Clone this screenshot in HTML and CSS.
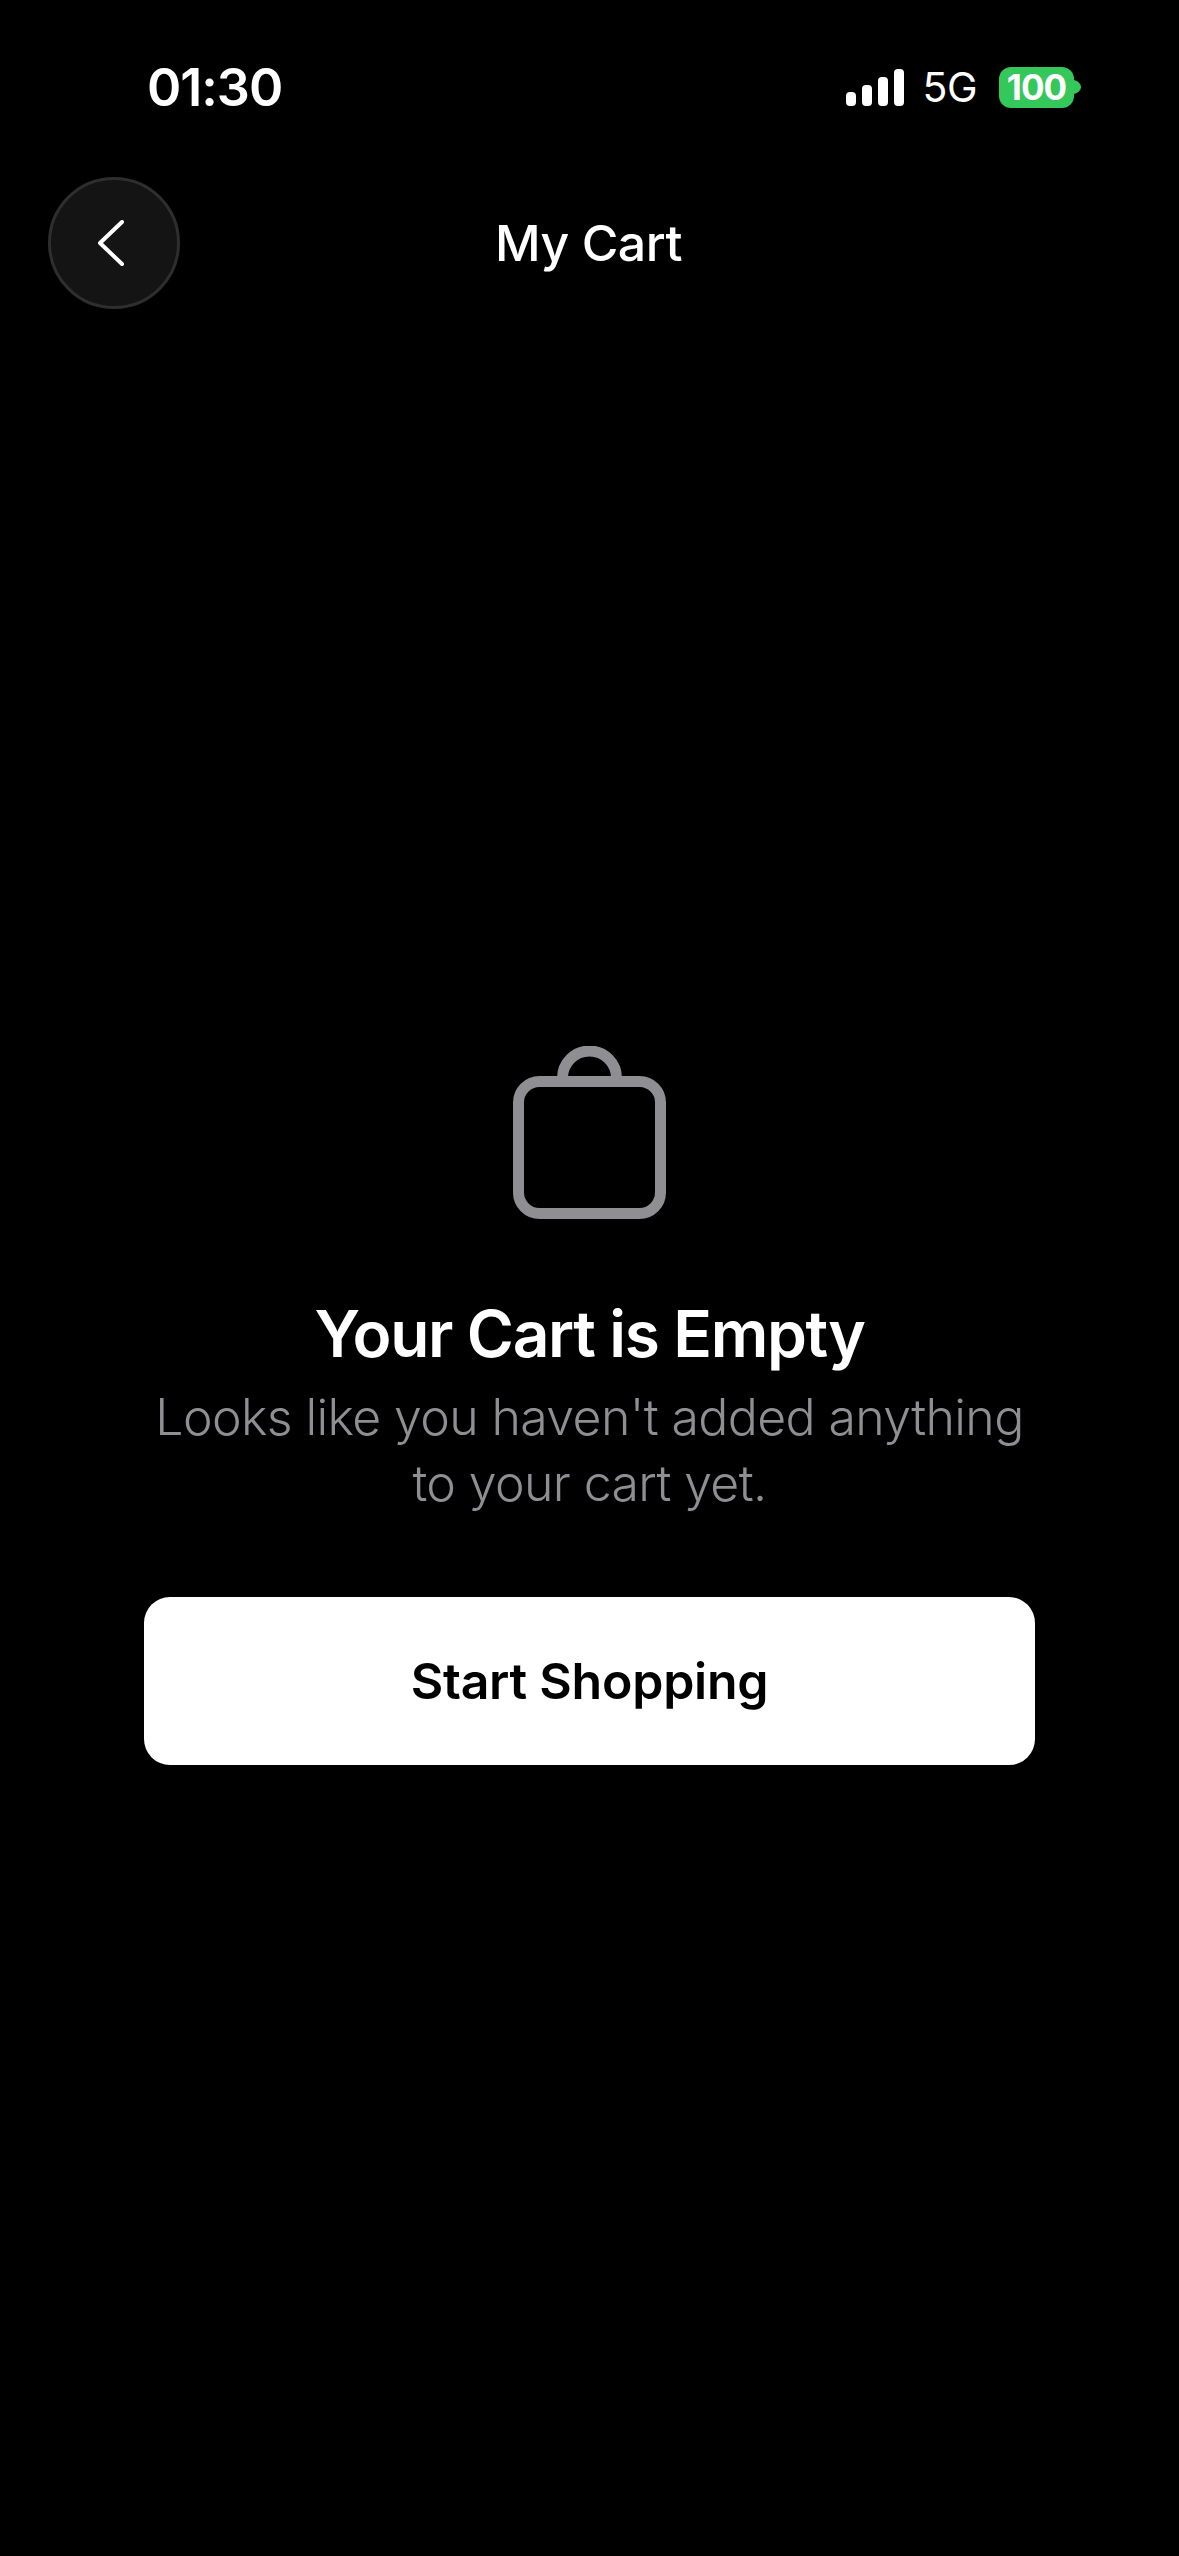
FILE: index.html
```html
<!DOCTYPE html>
<html lang="en">
<head>
<meta charset="utf-8">
<title>My Cart</title>
<link rel="stylesheet" href="styles.css">
</head>
<body>
<div class="screen">
  <div class="status">
    <span class="time">01:30</span>
    <div class="status-right">
      <svg class="signal" width="58" height="37" viewBox="0 0 58 37"><rect x="0" y="23" width="10" height="14" rx="4"/><rect x="16" y="16" width="10" height="21" rx="4"/><rect x="32" y="8" width="10" height="29" rx="4"/><rect x="48" y="0" width="10" height="37" rx="4"/></svg>
      <span class="net">5G</span>
      <div class="battery"><span class="battery-body">100</span><svg class="nub" width="7" height="14" viewBox="0 0 7 14"><path d="M0 0C4 1 7 4 7 7S4 13 0 14Z"/></svg></div>
    </div>
  </div>
  <div class="nav">
    <button class="back" aria-label="Back"><svg width="26" height="46" viewBox="0 0 26 46"><path d="M24 2 2 23l22 21" fill="none" stroke="#fff" stroke-width="4" stroke-linecap="round" stroke-linejoin="round"/></svg></button>
    <h1 class="nav-title">My Cart</h1>
    <span class="nav-spacer"></span>
  </div>
  <main class="empty">
    <svg class="bag" width="153" height="173" viewBox="0 0 153 173"><path d="M49.500 36V32a27 27 0 0 1 54 0V36" fill="none" stroke="#8e8e93" stroke-width="11"/><rect x="5.500" y="35.500" width="142" height="132" rx="21" fill="none" stroke="#8e8e93" stroke-width="11"/></svg>
    <h2 class="title">Your Cart is Empty</h2>
    <p class="sub">Looks like you haven't added anything<br>to your cart yet.</p>
    <button class="cta">Start Shopping</button>
  </main>
</div>
</body>
</html>
```
FILE: styles.css
```css
* { box-sizing: border-box; margin: 0; padding: 0; }
html, body { background: #000; }
.screen {
  width: 1179px;
  height: 2556px;
  background: #000;
  color: #fff;
  font-family: Inter, "Noto Sans", sans-serif;
  display: flex;
  flex-direction: column;
  overflow: hidden;
}
.status {
  height: 177px;
  padding: 57px 98px 0 147px;
  display: flex;
  justify-content: space-between;
  align-items: flex-start;
}
.time { font-size: 52px; font-weight: 600; line-height: 62px; letter-spacing: -1px; }
.status-right { display: flex; align-items: center; height: 52px; margin-top: 4px; }
.signal { fill: #fff; margin-right: 18px; }
.net { font-size: 41px; font-weight: 400; line-height: 52px; letter-spacing: -0.5px; margin-right: 22px; }
.battery { display: flex; align-items: center; }
.battery-body {
  width: 75px;
  height: 41px;
  border-radius: 12px;
  background: #34c759;
  color: #fff;
  font-size: 35px;
  font-weight: 700;
  line-height: 41px;
  letter-spacing: -1px;
  text-align: center;
}
.nub { fill: #34c759; }
.nav {
  display: grid;
  grid-template-columns: 132px 1fr 132px;
  align-items: center;
  padding: 0 48px;
}
.back {
  width: 132px;
  height: 132px;
  border-radius: 50%;
  background: #141414;
  border: 3px solid #2e2e2e;
  display: flex;
  align-items: center;
  justify-content: center;
}
.back svg { margin-right: 6px; }
.nav-title { font-size: 50px; font-weight: 500; letter-spacing: -0.5px; text-align: center; padding-right: 2px; }
.empty {
  padding-top: 737px;
  display: flex;
  flex-direction: column;
  align-items: center;
}
.title { font-size: 64px; font-weight: 600; line-height: 78px; letter-spacing: -1.35px; margin-top: 76px; }
.sub {
  color: #8e8e93;
  font-size: 50px;
  font-weight: 300;
  line-height: 66px;
  letter-spacing: -0.62px;
  text-align: center;
  margin-top: 11px;
}
.cta {
  width: 891px;
  height: 168px;
  margin-top: 81px;
  border: 0;
  border-radius: 26px;
  background: #fff;
  color: #000;
  font-family: inherit;
  font-size: 50px;
  font-weight: 600;
  letter-spacing: -0.25px;
}
```
